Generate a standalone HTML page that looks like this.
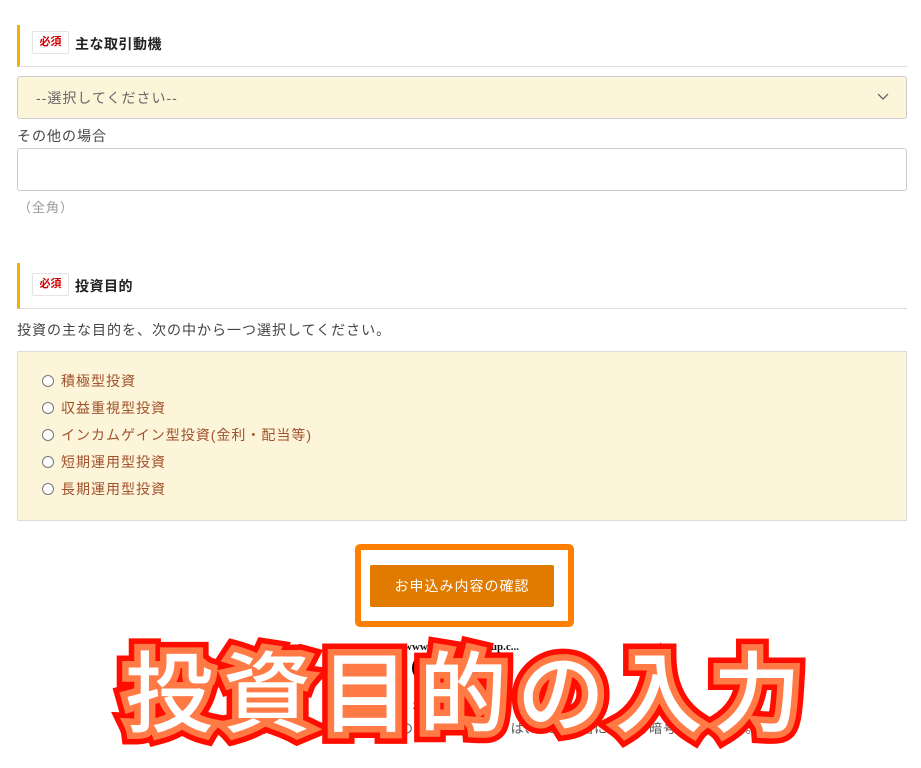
<!DOCTYPE html>
<html><head><meta charset="utf-8"><style>
*{margin:0;padding:0;box-sizing:border-box}
body{width:921px;height:768px;background:#fff;font-family:"Liberation Sans","Noto Sans CJK JP",sans-serif;color:#333;position:relative;overflow:hidden}
.a{position:absolute}
.hd{position:absolute;left:17px;width:890px;border-left:3px solid #f0b400;border-bottom:1px solid #ddd}
.badge{position:absolute;left:12px;width:37px;height:23px;border:1px solid #e4e4e4;border-radius:2px;background:#fff;color:#d40000;font-size:11px;font-weight:bold;text-align:center;line-height:21px}
.ttl{position:absolute;left:55px;font-size:14px;font-weight:bold;color:#222;letter-spacing:.5px}
.box{position:absolute;left:17px;width:890px;border:1px solid #ccc;border-radius:3px}
.r{position:absolute;left:42px;font-size:14px;color:#a0522d;line-height:16px;letter-spacing:1px}
.r i{display:inline-block;width:12px;height:12px;border:1px solid #777;border-radius:50%;vertical-align:-1px;margin-right:7px;background:#fff}
.big{position:absolute;left:125px;top:628px;font-family:"Noto Sans CJK JP",sans-serif;font-weight:500;font-size:88px;letter-spacing:10px;white-space:nowrap;line-height:120px}
.t{letter-spacing:1px}
</style></head><body>
<div class="hd" style="top:25px;height:42px"><div class="badge" style="top:6px">必須</div><div class="ttl" style="top:9px">主な取引動機</div></div>
<div class="box t" style="top:76px;height:43px;background:#fdf5d9"><span class="a" style="left:18px;top:11px;font-size:14px;color:#666">--選択してください--</span>
<svg class="a" style="left:859px;top:16px" width="12" height="8"><path d="M1 1 L6 6 L11 1" fill="none" stroke="#555" stroke-width="1.2"/></svg></div>
<div class="a t" style="left:17px;top:126px;font-size:14px;color:#444">その他の場合</div>
<div class="box" style="top:148px;height:43px"></div>
<div class="a t" style="left:18px;top:197px;font-size:13px;color:#999">（全角）</div>
<div class="hd" style="top:263px;height:46px"><div class="badge" style="top:10px">必須</div><div class="ttl" style="top:13px">投資目的</div></div>
<div class="a t" style="left:17px;top:320px;font-size:14px;color:#444">投資の主な目的を、次の中から一つ選択してください。</div>
<div class="a" style="left:17px;top:351px;width:890px;height:170px;background:#fdf5d9;border:1px solid #ddd"></div>
<div class="r" style="top:373px"><i></i>積極型投資</div>
<div class="r" style="top:400px"><i></i>収益重視型投資</div>
<div class="r" style="top:427px"><i></i>インカムゲイン型投資(金利・配当等)</div>
<div class="r" style="top:454px"><i></i>短期運用型投資</div>
<div class="r" style="top:481px"><i></i>長期運用型投資</div>
<div class="a" style="left:355px;top:544px;width:219px;height:83px;border:6px solid #ff8000;border-radius:5px"></div>
<div class="a t" style="left:370px;top:565px;width:184px;height:42px;background:#e07b00;border-radius:2px;color:#fff;font-size:14px;text-align:center;line-height:42px">お申込み内容の確認</div>
<div class="a" style="left:404px;top:641px;font-family:'Liberation Serif',serif;font-weight:bold;font-size:11px;color:#111">www2.hxxxxxxxroup.c...</div>
<div class="a" style="left:412px;top:654px;width:28px;height:28px;border-radius:50%;border:5px solid #000"></div>
<div class="a" style="left:413px;top:701px;font-family:'Liberation Serif',serif;font-weight:bold;font-size:10px;color:#111">2019 xxxxx 0</div>
<div class="a" style="left:190px;top:718px;font-size:13px;color:#555;white-space:nowrap;letter-spacing:1px">お客様の大切なデータは、お客様のすべてのデータは、SSL通信によって暗号化されます。</div>
<div class="big" style="-webkit-text-stroke:24px #ff0d00;color:#ff0d00">投資目的の入力</div>
<div class="big" style="-webkit-text-stroke:13px #ff7a45;color:#ff7a45">投資目的の入力</div>
<div class="big" style="color:#fff">投資目的の入力</div>
</body></html>
